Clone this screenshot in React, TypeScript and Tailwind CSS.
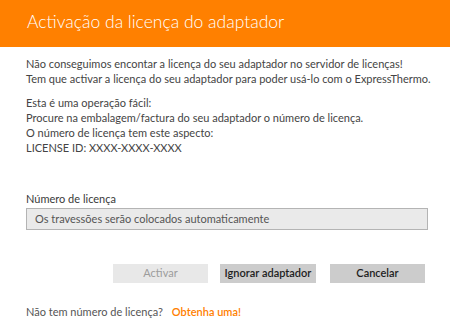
export default function App() {
  return (
    <div className="w-[450px] h-[330px] bg-white font-['Lato',sans-serif] text-[#444444] overflow-hidden whitespace-nowrap">
      {/* Header */}
      <div className="h-[47px] bg-[#ff8000] pl-[27px] pt-[10px]">
        <h1 className="text-[17.5px] font-light text-white leading-[24px]">
          Activação da licença do adaptador
        </h1>
      </div>

      {/* Message */}
      <div className="px-[26px] pt-[9px] text-[11px] leading-[15px]">
        <p>Não conseguimos encontar a licença do seu adaptador no servidor de licenças!</p>
        <p>Tem que activar a licença do seu adaptador para poder usá-lo com o ExpressThermo.</p>
        <div className="mt-[9px]">
          <p>Esta é uma operação fácil:</p>
          <p>Procure na embalagem/factura do seu adaptador o número de licença.</p>
          <p>O número de licença tem este aspecto:</p>
          <p>LICENSE ID: XXXX-XXXX-XXXX</p>
        </div>
      </div>

      {/* License field */}
      <div className="pl-[26px] mt-[36px]">
        <label className="block text-[11px] leading-[15px] text-[#3a3a3a]">Número de licença</label>
        <div className="mt-[2px] w-[402px] h-[22px] border border-[#b4b4b4] bg-[#eaeaea] px-[8px] flex items-center text-[11px] text-[#555555]">
          Os travessões serão colocados automaticamente
        </div>
      </div>

      {/* Buttons */}
      <div className="mt-[34px] flex justify-end pr-[25px] text-[11px]">
        <button className="w-[95px] h-[19px] bg-[#e8e8e8] text-[#9c9c9c]">Activar</button>
        <button className="ml-[12px] w-[96px] h-[19px] bg-[#cccccc] text-[#1e1e1e] font-semibold">
          Ignorar adaptador
        </button>
        <button className="ml-[14px] w-[95px] h-[19px] bg-[#cccccc] text-[#1e1e1e] font-semibold">
          Cancelar
        </button>
      </div>

      {/* Footer */}
      <div className="mt-[21px] px-[26px] text-[11px] leading-[15px] flex">
        <span className="text-[#555555]">Não tem número de licença?</span>
        <span className="ml-[9px] text-[#ff8000] font-semibold">Obtenha uma!</span>
      </div>
    </div>
  );
}
